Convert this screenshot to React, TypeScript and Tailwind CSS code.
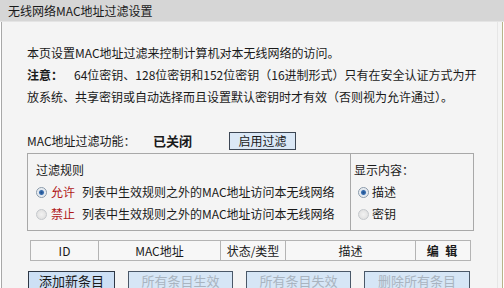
import React from "react";

const Radio = ({ on }: { on: boolean }) => (
  <span
    className={
      "inline-block w-[11px] h-[11px] rounded-full border shrink-0 " +
      (on
        ? "border-[#8a9aaa] bg-[radial-gradient(circle,#1f4f8f_0,#3a6fb0_2px,#dfe6ee_3px,#f4f6f8_5px)]"
        : "border-[#c4c8cc] bg-[radial-gradient(circle,#f2f2f2_0,#e0e0e0_5px)]")
    }
  />
);

export default function App() {
  return (
    <div
      className="w-[504px] h-[288px] overflow-hidden bg-[#f4f4f4] text-[12px] text-[#1a1a1a] flex flex-col"
      style={{ fontFamily: '"Noto Sans CJK SC", "Liberation Sans", sans-serif' }}
    >
      <div className="h-[22px] shrink-0 bg-[#d6d6d6] border-b border-[#e4e4e4] flex items-center pl-[8px] pr-[4px] leading-[22px]">
        无线网络MAC地址过滤设置
      </div>
      <div className="flex-1 flex">
        <div className="w-[1px] bg-[#ffffff]" />
        <div className="w-[1px] bg-[#a8a8a8]" />
        <div className="flex-1 flex flex-col pl-[25px] pr-[20px]">
          <div className="pt-[20px] leading-[22px] whitespace-nowrap">
            <div>本页设置MAC地址过滤来控制计算机对本无线网络的访问。</div>
            <div className="flex">
              <span className="font-bold w-[47px]">注意：</span>
              <span>64位密钥、128位密钥和152位密钥（16进制形式）只有在安全认证方式为开</span>
            </div>
            <div>放系统、共享密钥或自动选择而且设置默认密钥时才有效（否则视为允许通过）。</div>
          </div>
          <div className="mt-[24px] h-[18px] flex items-center">
            <span className="w-[126px]">MAC地址过滤功能：</span>
            <span className="w-[76px] font-bold text-[13px]">已关闭</span>
            <span className="w-[67px] h-[18px] border border-[#3c4654] bg-[#dbe8f6] flex items-center justify-center">
              启用过滤
            </span>
          </div>
          <div className="mt-[3px] h-[78px] flex border border-[#a8a8a8] mr-[3px]">
            <div className="w-[323px] border-r border-[#a8a8a8] pl-[8px] flex flex-col">
              <div className="h-[22px] mt-[5px] flex items-center">过滤规则</div>
              <div className="h-[22px] flex items-center">
                <Radio on />
                <span className="ml-[4px] text-[#b01818]">允许</span>
                <span className="ml-[7px]">列表中生效规则之外的MAC地址访问本无线网络</span>
              </div>
              <div className="h-[22px] flex items-center">
                <Radio on={false} />
                <span className="ml-[4px] text-[#b01818]">禁止</span>
                <span className="ml-[7px]">列表中生效规则之外的MAC地址访问本无线网络</span>
              </div>
            </div>
            <div className="flex-1 pl-[3px] flex flex-col">
              <div className="h-[22px] mt-[5px] flex items-center">显示内容：</div>
              <div className="h-[22px] flex items-center pl-[4px]">
                <Radio on />
                <span className="ml-[3px]">描述</span>
              </div>
              <div className="h-[22px] flex items-center pl-[4px]">
                <Radio on={false} />
                <span className="ml-[3px]">密钥</span>
              </div>
            </div>
          </div>
          <div className="mt-[9px] ml-[3px] mr-[6px] h-[21px] flex border border-[#b4b4b4] bg-[#f7f7f7]">
            <div className="w-[68px] border-r border-[#b4b4b4] flex items-center justify-center">ID</div>
            <div className="w-[122px] border-r border-[#b4b4b4] flex items-center justify-center">MAC地址</div>
            <div className="w-[65px] border-r border-[#b4b4b4] flex items-center justify-center">状态/类型</div>
            <div className="w-[130px] border-r border-[#b4b4b4] flex items-center justify-center">描述</div>
            <div className="flex-1 flex items-center justify-center font-bold tracking-[2px]">编 辑</div>
          </div>
          <div className="mt-[10px] ml-[1px] flex gap-[13px]">
            <span className="w-[87px] h-[20px] border border-[#2e3846] bg-[#cde0f5] flex items-center justify-center text-[13px]">
              添加新条目
            </span>
            <span className="w-[105px] h-[20px] border border-[#4a5868] bg-[#d6e6f6] flex items-center justify-center text-[13px] text-[#a9b4c0]">
              所有条目生效
            </span>
            <span className="w-[105px] h-[20px] border border-[#4a5868] bg-[#d6e6f6] flex items-center justify-center text-[13px] text-[#a9b4c0]">
              所有条目失效
            </span>
            <span className="w-[106px] h-[20px] border border-[#4a5868] bg-[#d6e6f6] flex items-center justify-center text-[13px] text-[#a9b4c0]">
              删除所有条目
            </span>
          </div>
        </div>
        <div className="w-[1px] bg-[#e6e6e6]" />
        <div className="w-[4px]" />
        <div className="w-[1px] bg-[#b8b48a]" />
        <div className="w-[1px] bg-[#ffffff]" />
      </div>
    </div>
  );
}
